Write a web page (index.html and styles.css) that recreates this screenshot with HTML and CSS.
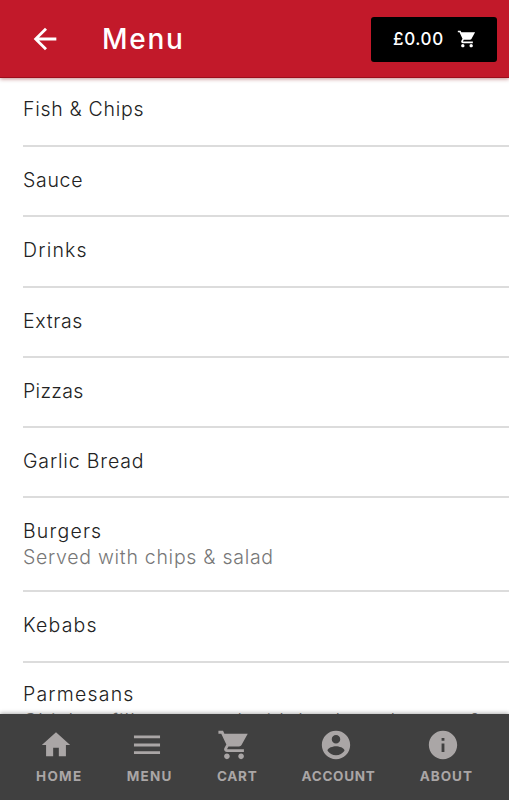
FILE: index.html
```html
<!DOCTYPE html>
<html lang="en">
<head>
    <meta charset="UTF-8">
    <meta name="viewport" content="width=device-width, initial-scale=1.0">
    <title>Menu</title>
    <link rel="stylesheet" href="styles.css">
</head>
<body>
    <header class="toolbar">
        <button type="button" class="back" aria-label="Back">
            <svg viewBox="0 0 24 24"><path d="M20 11H7.830l5.590-5.590L12 4l-8 8 8 8 1.410-1.410L7.830 13H20v-2z"/></svg>
        </button>
        <h1 class="title">Menu</h1>
        <button type="button" class="basket">
            <span>£0.00</span>
            <svg viewBox="0 0 24 24"><path d="M7 18c-1.100 0-1.990.9-1.990 2S5.900 22 7 22s2-.9 2-2-.9-2-2-2zM1 2v2h2l3.600 7.590-1.350 2.450c-.16.28-.25.61-.25.96 0 1.100.9 2 2 2h12v-2H7.420c-.14 0-.25-.11-.25-.25l.03-.12.9-1.630h7.450c.75 0 1.410-.41 1.750-1.030L21.700 4H5.210l-.94-2H1zm16 16c-1.100 0-1.990.9-1.990 2s.89 2 1.990 2 2-.9 2-2-.9-2-2-2z"/></svg>
        </button>
    </header>

    <main class="list">
        <div class="item"><h2>Fish &amp; Chips</h2></div>
        <div class="item"><h2>Sauce</h2></div>
        <div class="item"><h2 class="wide">Drinks</h2></div>
        <div class="item"><h2>Extras</h2></div>
        <div class="item"><h2 class="tight">Pizzas</h2></div>
        <div class="item"><h2 class="loose">Garlic Bread</h2></div>
        <div class="item with-note">
            <h2 class="wide">Burgers</h2>
            <p>Served with chips &amp; salad</p>
        </div>
        <div class="item"><h2 class="wide">Kebabs</h2></div>
        <div class="item with-note last">
            <h2 class="wide">Parmesans</h2>
            <p>Chicken fillet covered with bechamel sauce &amp;</p>
        </div>
    </main>

    <nav class="tabs">
        <a class="tab home">
            <svg viewBox="0 0 24 24"><path d="M10 20v-6h4v6h5v-8h3L12 3 2 12h3v8z"/></svg>
            <span>HOME</span>
        </a>
        <a class="tab menu">
            <svg viewBox="0 0 24 24"><path d="M2.800 5.300h18.400v2H2.800zM2.800 11h18.400v2H2.800zM2.800 16.400h18.400v2H2.800z"/></svg>
            <span>MENU</span>
        </a>
        <a class="tab cart">
            <svg viewBox="0 0 24 24"><path d="M7 18c-1.100 0-1.990.9-1.990 2S5.900 22 7 22s2-.9 2-2-.9-2-2-2zM1 2v2h2l3.600 7.590-1.350 2.450c-.16.28-.25.61-.25.96 0 1.100.9 2 2 2h12v-2H7.420c-.14 0-.25-.11-.25-.25l.03-.12.9-1.630h7.450c.75 0 1.410-.41 1.750-1.030L21.700 4H5.210l-.94-2H1zm16 16c-1.100 0-1.990.9-1.990 2s.89 2 1.990 2 2-.9 2-2-.9-2-2-2z"/></svg>
            <span>CART</span>
        </a>
        <a class="tab account">
            <svg viewBox="0 0 24 24"><path d="M12 2C6.480 2 2 6.480 2 12s4.480 10 10 10 10-4.480 10-10S17.520 2 12 2zm0 3c1.660 0 3 1.340 3 3s-1.340 3-3 3-3-1.340-3-3 1.340-3 3-3zm0 14.200c-2.500 0-4.710-1.280-6-3.220.030-1.990 4-3.080 6-3.080 1.990 0 5.970 1.090 6 3.080-1.290 1.940-3.500 3.220-6 3.220z"/></svg>
            <span>ACCOUNT</span>
        </a>
        <a class="tab about">
            <svg viewBox="0 0 24 24"><path d="M12 2C6.480 2 2 6.480 2 12s4.480 10 10 10 10-4.480 10-10S17.520 2 12 2zm1 15h-2v-6h2v6zm0-8h-2V7h2v2z"/></svg>
            <span>ABOUT</span>
        </a>
    </nav>
</body>
</html>
```
FILE: styles.css
```css
* {
    box-sizing: border-box;
}

body {
    margin: 0;
    height: 100vh;
    display: flex;
    flex-direction: column;
    overflow: hidden;
    font-family: Inter, "Open Sans", sans-serif;
    background-color: #fff;
}

h1, h2, p {
    margin: 0;
    white-space: nowrap;
}

button {
    border: 0;
    padding: 0;
    font-family: inherit;
    color: #fff;
    background: none;
}

svg {
    display: block;
    fill: currentColor;
}

/* top bar */
.toolbar {
    flex: none;
    z-index: 1;
    display: flex;
    align-items: center;
    height: 78px;
    padding-right: 12px;
    background-color: #c2192a;
    border-bottom: 1px solid #9c0d1b;
    box-shadow: 0 1px 4px rgba(120, 0, 0, 0.45);
}

.back {
    margin-left: 28px;
}

.back svg {
    width: 34px;
    height: 34px;
}

.title {
    flex: 1;
    margin-left: 40px;
    color: #fff;
    font-size: 28px;
    font-weight: 450;
    letter-spacing: 1.7px;
}

.basket {
    display: flex;
    align-items: center;
    justify-content: space-between;
    width: 126px;
    height: 45px;
    margin-top: 1px;
    padding: 0 20px 0 22px;
    border-radius: 3px;
    background-color: #000;
    font-size: 17px;
    font-weight: 500;
    letter-spacing: 0.6px;
}

.basket svg {
    width: 20px;
    height: 20px;
}

/* categories */
.list {
    flex: 1;
    min-height: 0;
    overflow: hidden;
    padding-left: 23px;
}

.item {
    height: 70.3px;
    padding-top: 20px;
    border-bottom: 2px solid #dcdcdc;
}

.item:first-child {
    height: 69px;
    padding-top: 18px;
}

.item h2 {
    color: #222;
    font-size: 19.5px;
    font-weight: 300;
    line-height: 26px;
    letter-spacing: 0.7px;
}

.item h2.tight {
    letter-spacing: 0.3px;
}

.item h2.loose {
    letter-spacing: 0.85px;
}

.item h2.wide {
    letter-spacing: 1.2px;
}

.item p {
    color: #777;
    font-size: 19.5px;
    font-weight: 300;
    line-height: 26px;
    letter-spacing: 0.72px;
}

.item.with-note {
    height: 94px;
}

.item.last {
    padding-top: 18px;
}

.item.last p {
    margin-top: 1px;
    letter-spacing: 1.1px;
}

/* bottom tabs */
.tabs {
    flex: none;
    z-index: 1;
    display: flex;
    justify-content: space-between;
    height: 86px;
    padding: 14px 36px 0;
    background-color: #404040;
    box-shadow: 0 -1px 4px rgba(0, 0, 0, 0.3);
}

.tab {
    display: flex;
    flex-direction: column;
    align-items: center;
    color: #aaa6a6;
    font-size: 13.5px;
    font-weight: 700;
    line-height: 16px;
    letter-spacing: 0.7px;
}

.home,
.menu {
    letter-spacing: 1.3px;
}

.about {
    letter-spacing: 1px;
}

.tab svg {
    width: 34px;
    height: 34px;
    margin: 0 6px 6px 0;
}
```
